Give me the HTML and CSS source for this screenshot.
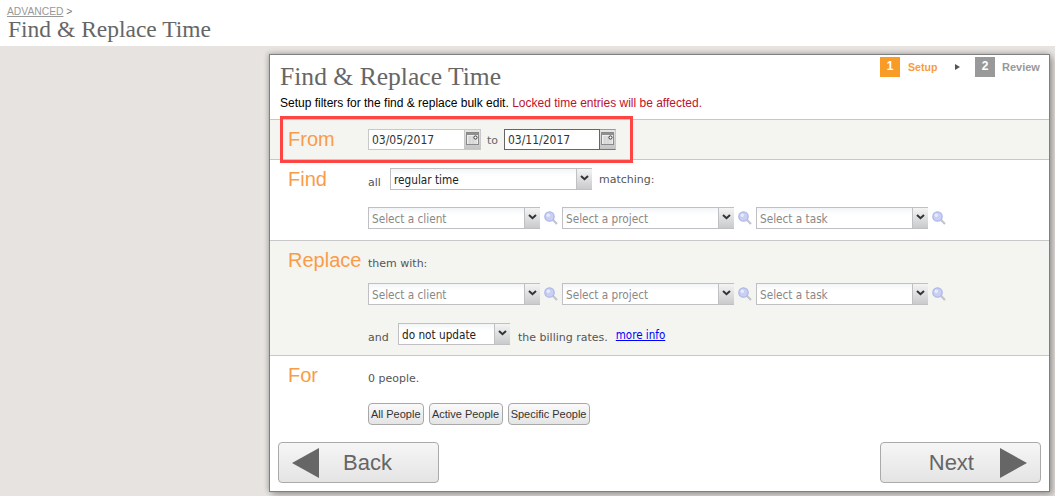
FILE: index.html
```html
<!DOCTYPE html>
<html lang="en">
<head>
<meta charset="utf-8">
<title>Find &amp; Replace Time</title>
<link rel="stylesheet" href="styles.css">
</head>
<body>
<svg class="defs" width="0" height="0" aria-hidden="true">
  <defs>
    <symbol id="mag" viewBox="0 0 14 14">
      <line x1="8.8" y1="8.8" x2="13" y2="13" stroke="#c4c4cc" stroke-width="2.2"/>
      <circle cx="5.5" cy="5.5" r="4.7" fill="#c9d0f4" stroke="#aeb7e8" stroke-width="1.2"/>
      <circle cx="4.3" cy="4.2" r="1.7" fill="#e9ecfc"/>
    </symbol>
    <symbol id="chev" viewBox="0 0 9 6">
      <path d="M1 1l3.5 3.2L8 1" fill="none" stroke="#333" stroke-width="2"/>
    </symbol>
    <symbol id="cal" viewBox="0 0 13 13">
      <rect x="0.5" y="0.5" width="12" height="12" fill="#efefef" stroke="#8a8a8a"/>
      <rect x="1" y="1" width="11" height="2" fill="#8f8f8f"/>
      <path d="M2 5h9M2 7h9M2 9h9M2 11h9M4 4v8M7 4v8" stroke="#cfcfcf" stroke-width="1"/>
      <circle cx="9.5" cy="5.5" r="1.6" fill="#fff" stroke="#333"/>
    </symbol>
  </defs>
</svg>
<header class="top">
  <div class="crumb"><a class="crumb-link" href="#">ADVANCED</a> &gt;</div>
  <h1 class="page-title">Find &amp; Replace Time</h1>
</header>
<main class="stage">
  <section class="card">
    <div class="card-head">
      <div class="head-row">
        <h2 class="card-title">Find &amp; Replace Time</h2>
        <ol class="steps">
          <li class="num num-on">1</li>
          <li class="step-name step-on">Setup</li>
          <li class="step-arrow"></li>
          <li class="num num-off">2</li>
          <li class="step-name step-off">Review</li>
        </ol>
      </div>
      <p class="intro">Setup filters for the find &amp; replace bulk edit. <span class="warn">Locked time entries will be affected.</span></p>
    </div>

    <div class="band band-from">
      <div class="highlight"></div>
      <div class="label label-from">From</div>
      <div class="row">
        <div class="date"><span class="date-text">03/05/2017</span><span class="date-btn"><svg class="cal"><use href="#cal"/></svg></span></div>
        <span class="txt to">to</span>
        <div class="date date-focus"><span class="date-text">03/11/2017</span><span class="date-btn"><svg class="cal"><use href="#cal"/></svg></span></div>
      </div>
    </div>

    <div class="band band-find">
      <div class="label">Find</div>
      <div class="rows gap-17">
        <div class="row">
          <span class="txt low all">all</span>
          <div class="sel sel-type"><span class="sel-text">regular time</span><span class="sel-btn"><svg class="chev"><use href="#chev"/></svg></span></div>
          <span class="txt matching">matching:</span>
        </div>
        <div class="row">
          <div class="sel sel-pick"><span class="sel-text ph">Select a client</span><span class="sel-btn"><svg class="chev"><use href="#chev"/></svg></span></div><svg class="mag"><use href="#mag"/></svg>
          <div class="sel sel-pick"><span class="sel-text ph">Select a project</span><span class="sel-btn"><svg class="chev"><use href="#chev"/></svg></span></div><svg class="mag"><use href="#mag"/></svg>
          <div class="sel sel-pick"><span class="sel-text ph">Select a task</span><span class="sel-btn"><svg class="chev"><use href="#chev"/></svg></span></div><svg class="mag"><use href="#mag"/></svg>
        </div>
      </div>
    </div>

    <div class="band band-replace">
      <div class="label label-up">Replace</div>
      <div class="rows">
        <div class="row"><span class="txt">them with:</span></div>
        <div class="row row-pick">
          <div class="sel sel-pick"><span class="sel-text ph">Select a client</span><span class="sel-btn"><svg class="chev"><use href="#chev"/></svg></span></div><svg class="mag"><use href="#mag"/></svg>
          <div class="sel sel-pick"><span class="sel-text ph">Select a project</span><span class="sel-btn"><svg class="chev"><use href="#chev"/></svg></span></div><svg class="mag"><use href="#mag"/></svg>
          <div class="sel sel-pick"><span class="sel-text ph">Select a task</span><span class="sel-btn"><svg class="chev"><use href="#chev"/></svg></span></div><svg class="mag"><use href="#mag"/></svg>
        </div>
        <div class="row row-rates">
          <span class="txt low and">and</span>
          <div class="sel sel-rate"><span class="sel-text">do not update</span><span class="sel-btn"><svg class="chev"><use href="#chev"/></svg></span></div>
          <span class="txt low billing">the billing rates.</span>
          <a class="more" href="#">more info</a>
        </div>
      </div>
    </div>

    <div class="band band-for">
      <div class="label label-up">For</div>
      <div class="rows">
        <div class="row"><span class="txt">0 people.</span></div>
        <div class="row row-btns">
          <button class="mini" type="button">All People</button>
          <button class="mini mini-active" type="button">Active People</button>
          <button class="mini mini-specific" type="button">Specific People</button>
        </div>
      </div>
    </div>

    <footer class="nav">
      <button class="big big-back" type="button"><span class="tri tri-left"></span><span class="big-text">Back</span></button>
      <button class="big big-next" type="button"><span class="big-text">Next</span><span class="tri tri-right"></span></button>
    </footer>
  </section>
</main>
</body>
</html>
```

FILE: styles.css
```css
* { box-sizing: border-box; }
html, body { margin: 0; padding: 0; height: 496px; overflow: hidden; background: #e6e3e0; }
body { font-family: "DejaVu Sans", Verdana, sans-serif; font-size: 11px; color: #555; }
.defs { position: absolute; }

.top { height: 46px; background: #fff; padding: 6px 0 0 7px; }
.crumb { font-family: "Liberation Sans", Arial, sans-serif; font-size: 10.3px; line-height: 11px; color: #777; }
.crumb-link { color: #999; text-decoration: underline; }
.page-title { margin: 0 0 0 1px; font-family: "Liberation Serif", Georgia, serif; font-weight: 400; font-size: 23.5px; line-height: 25px; color: #666; }

.stage { padding: 8px 5px 0 269px; }
.card { width: 781px; height: 438px; background: #fff; border: 1px solid #808080; box-shadow: 3px 3px 7px rgba(0,0,0,.3), -1px -1px 5px rgba(0,0,0,.2); }

.card-head { height: 64px; padding: 0 8px 0 10px; }
.head-row { display: flex; justify-content: space-between; height: 37px; }
.card-title { margin: 9px 0 0; font-family: "Liberation Serif", Georgia, serif; font-weight: 400; font-size: 25.6px; line-height: 26px; color: #666; }
.steps { display: flex; align-items: center; list-style: none; height: 20px; margin: 2px 0 0; padding: 0; font-family: "Liberation Sans", Arial, sans-serif; font-size: 11px; font-weight: 700; }
.num { width: 20px; height: 20px; color: #fff; text-align: center; line-height: 18px; font-size: 12px; }
.num-on { background: #f99c27; }
.num-off { background: #999; }
.step-name { margin-left: 8px; line-height: 22px; }
.step-on { color: #f99c3a; width: 47px; font-size: 10.6px; }
.step-off { color: #999; margin-left: 7px; width: 39px; }
.step-arrow { width: 0; height: 0; border-left: 5px solid #555; border-top: 3px solid transparent; border-bottom: 3px solid transparent; margin-right: 15px; }
.intro { margin: 4px 0 0; font-family: "Liberation Sans", Arial, sans-serif; font-size: 12px; line-height: 14px; color: #000; }
.warn { color: #c0102c; }

.band { position: relative; display: grid; grid-template-columns: 80px 1fr; padding-left: 18px; }
.band-from { height: 41px; background: #f4f4f0; border-top: 1px solid #c8c8c8; border-bottom: 1px solid #c8c8c8; align-items: center; }
.band-find { height: 80px; padding-top: 8px; }
.band-replace { height: 116px; padding-top: 11px; background: #f4f4f0; border-top: 1px solid #c8c8c8; border-bottom: 1px solid #c8c8c8; }
.band-for { height: 86px; padding-top: 11px; }
.highlight { position: absolute; left: 10px; top: -4px; width: 353px; height: 47px; border: 3px solid #f44; pointer-events: none; }

.label { font-family: "Liberation Sans", Arial, sans-serif; font-size: 20px; line-height: 22px; color: #f99c4a; }
.label-up { margin-top: -3px; }
.label-from { margin-top: -2px; }
.rows { display: flex; flex-direction: column; }
.gap-17 { gap: 17px; }
.row { display: flex; align-items: center; height: 22px; }
.row-pick { margin-top: 9px; }
.row-rates { margin-top: 18px; }
.row-btns { margin-top: 14px; gap: 5px; }
.txt { line-height: 22px; color: #555; white-space: nowrap; margin-top: 2px; }
.low { margin-top: 8px; }
.to { margin-left: 6px; margin-right: 6px; width: 11px; color: #666; }
.all { width: 22px; }
.matching { margin-left: 7px; }
.and { width: 30px; }
.billing { margin-left: 8px; }
.more { margin-left: 8px; color: #00f; text-decoration: underline; font-stretch: condensed; font-size: 11.5px; line-height: 14px; margin-top: 2px; }

.date { display: flex; height: 21px; background: #fff; }
.date-text { width: 97px; border: 1px solid #c8c8c8; font-stretch: condensed; font-size: 12px; line-height: 21px; padding-left: 3px; color: #333; }
.date-btn { width: 16px; display: flex; justify-content: center; padding-top: 2px; background: linear-gradient(#e6e6e6, #c4c4c4); border: solid #c8c8c8; border-width: 1px 1px 1px 0; }
.date-focus .date-text { width: 96px; border-color: #666; }
.date-focus .date-btn { border-bottom-color: #777; border-top-color: #999; }
.cal { width: 13px; height: 13px; }

.sel { display: flex; height: 22px; background: linear-gradient(#f2f5f7, #fff 35%); border: 1px solid #c0c0c4; }
.sel-type { width: 202px; }
.sel-pick { width: 172px; }
.sel-rate { width: 112px; }
.sel-text { flex: 1; min-width: 0; padding-left: 3px; font-stretch: condensed; font-size: 11.7px; line-height: 23px; color: #222; white-space: nowrap; }
.ph { color: #888; }
.sel-btn { width: 16px; flex: none; display: flex; justify-content: center; padding-top: 4px; background: linear-gradient(#f4f4f4, #c8cacc); border-left: 1px solid #c0c0c4; margin-right: -1px; }
.chev { width: 9px; height: 6px; margin-top: 2px; }
.mag { width: 14px; height: 14px; flex: none; margin: 0 4px 1px 4px; }

.mini { height: 22px; padding: 0 2px; background: linear-gradient(#fafafa, #e4e4e4); border: 1px solid #a8a8a8; border-radius: 4px; font-family: "Liberation Sans", Arial, sans-serif; font-size: 11px; color: #333; white-space: nowrap; }
.mini-active { width: 74px; }
.mini-specific { width: 82px; }
.nav { display: flex; justify-content: space-between; padding: 0 8px; }
.big { display: flex; align-items: center; width: 161px; height: 41px; padding: 0; background: linear-gradient(#f6f6f6, #e4e4e4); border: 1px solid #aaa; border-radius: 4px; font-family: "Liberation Sans", Arial, sans-serif; font-size: 22px; color: #666; }
.big-back { padding-left: 13px; }
.big-next { justify-content: flex-end; padding-right: 13px; }
.tri { width: 0; height: 0; border-top: 15.5px solid transparent; border-bottom: 15.5px solid transparent; }
.tri-left { border-right: 27px solid #666; margin-right: 24px; }
.tri-right { border-left: 27px solid #666; margin-left: 26px; }
```
